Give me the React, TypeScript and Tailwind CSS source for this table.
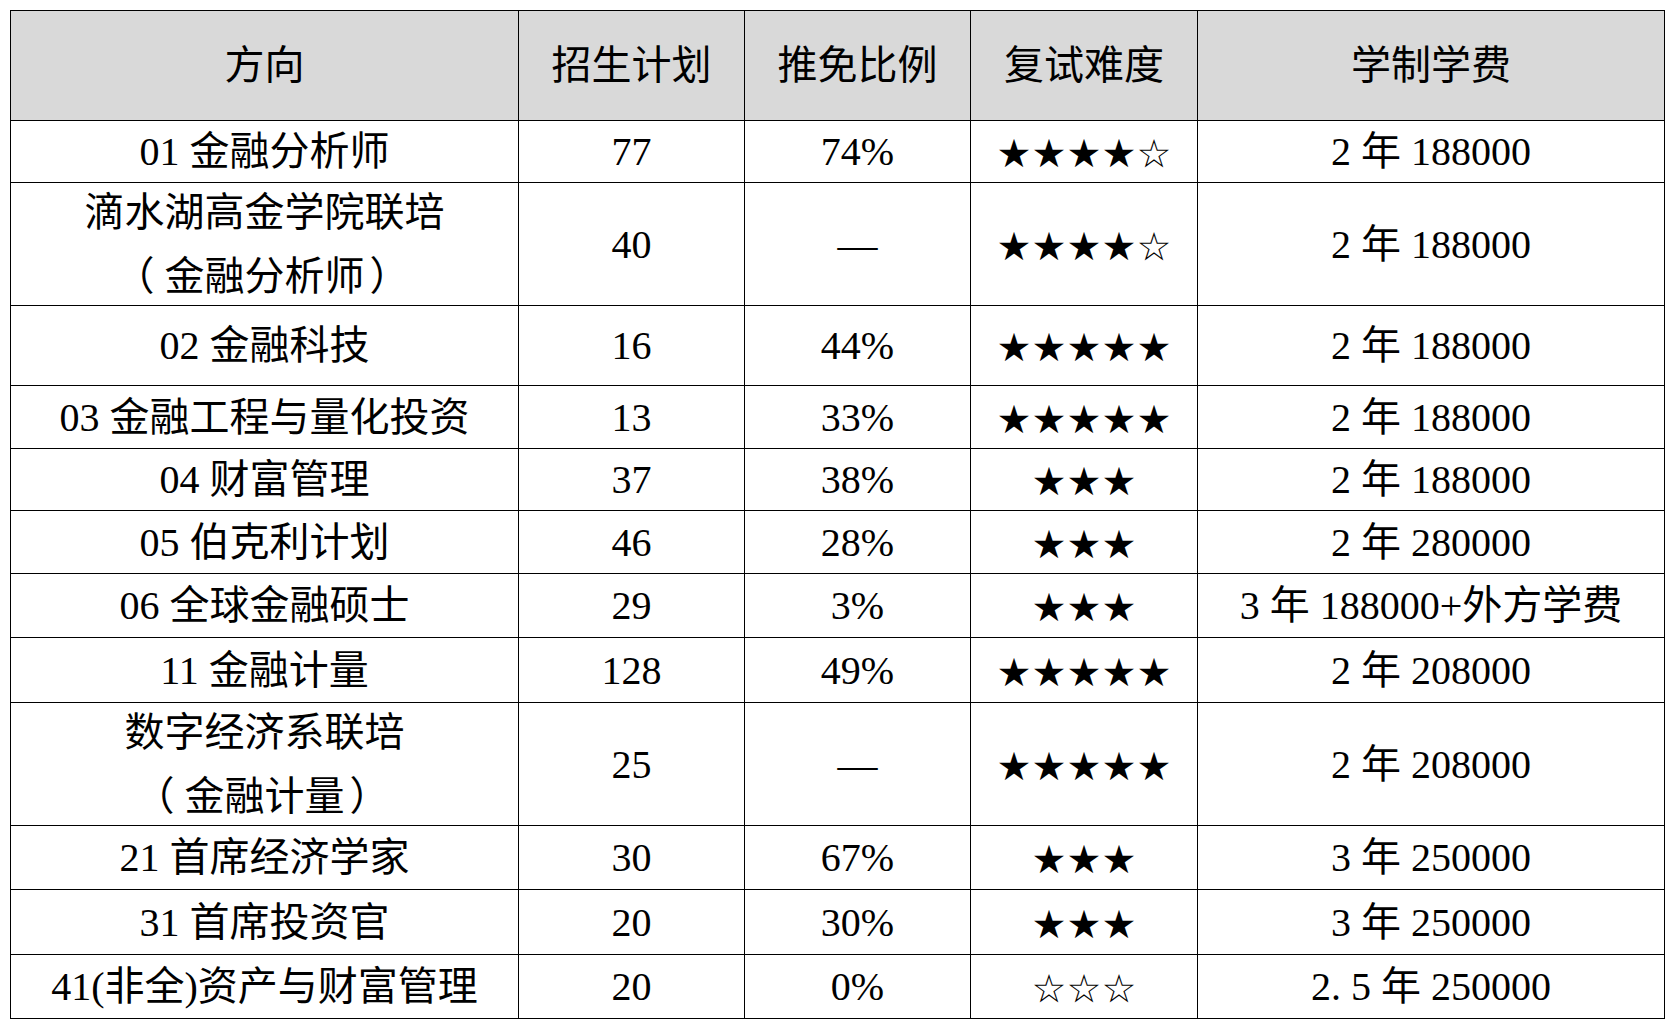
const headers = ["方向", "招生计划", "推免比例", "复试难度", "学制学费"];

type Row = {
  name: React.ReactNode[];
  plan: string;
  ratio: string;
  stars: string;
  fee: React.ReactNode;
};

// full-width brackets with the glyph sitting mid-box, like the SimSun source
const Paren = ({ open }: { open?: boolean }) => (
  <span className="inline-block w-[40px] font-['Noto_Sans_CJK_SC']">
    <span className={`inline-block ${open ? "-translate-x-[10px]" : "translate-x-[5px]"}`}>
      {open ? "（" : "）"}
    </span>
  </span>
);

const rows: Row[] = [
  { name: ["01 金融分析师"], plan: "77", ratio: "74%", stars: "★★★★☆", fee: "2 年 188000" },
  {
    name: [
      "滴水湖高金学院联培",
      <>
        <Paren open />
        金融分析师
        <Paren />
      </>,
    ],
    plan: "40",
    ratio: "—",
    stars: "★★★★☆",
    fee: "2 年 188000",
  },
  { name: ["02 金融科技"], plan: "16", ratio: "44%", stars: "★★★★★", fee: "2 年 188000" },
  { name: ["03 金融工程与量化投资"], plan: "13", ratio: "33%", stars: "★★★★★", fee: "2 年 188000" },
  { name: ["04 财富管理"], plan: "37", ratio: "38%", stars: "★★★", fee: "2 年 188000" },
  { name: ["05 伯克利计划"], plan: "46", ratio: "28%", stars: "★★★", fee: "2 年 280000" },
  { name: ["06 全球金融硕士"], plan: "29", ratio: "3%", stars: "★★★", fee: "3 年 188000+外方学费" },
  { name: ["11 金融计量"], plan: "128", ratio: "49%", stars: "★★★★★", fee: "2 年 208000" },
  {
    name: [
      "数字经济系联培",
      <>
        <Paren open />
        金融计量
        <Paren />
      </>,
    ],
    plan: "25",
    ratio: "—",
    stars: "★★★★★",
    fee: "2 年 208000",
  },
  { name: ["21 首席经济学家"], plan: "30", ratio: "67%", stars: "★★★", fee: "3 年 250000" },
  { name: ["31 首席投资官"], plan: "20", ratio: "30%", stars: "★★★", fee: "3 年 250000" },
  {
    name: ["41(非全)资产与财富管理"],
    plan: "20",
    ratio: "0%",
    stars: "☆☆☆",
    fee: (
      <>
        2<span className="mr-[10px]">.</span>5 年 250000
      </>
    ),
  },
];

const cell = "flex items-center justify-center border-r border-b border-black text-center";

export default function App() {
  return (
    <div className="min-h-screen bg-white pl-[10px] pt-[10px] text-black">
      <div
        className="grid w-[1655px] grid-cols-[508px_226px_226px_227px_467px] grid-rows-[110px_62px_123px_80px_63px_62px_63px_64px_65px_123px_64px_65px_64px] border-t border-l border-black text-[40px] leading-[61px]"
        style={{ fontFamily: '"Liberation Serif", "Noto Sans CJK SC", serif' }}
      >
        {headers.map((h) => (
          <div key={h} className={`${cell} bg-[#d9d9d9]`}>
            {h}
          </div>
        ))}

        {rows.map((r, i) => (
          <div key={i} className="contents">
            <div className={`${cell} flex-col`}>
              {r.name.map((line, j) => (
                <div key={j}>{line}</div>
              ))}
            </div>
            <div className={cell}>{r.plan}</div>
            <div className={cell}>{r.ratio}</div>
            <div className={cell}>
              <span className="pt-[4px] font-['DejaVu_Sans'] text-[39px]">{r.stars}</span>
            </div>
            <div className={cell}>
              <span>{r.fee}</span>
            </div>
          </div>
        ))}
      </div>
    </div>
  );
}
